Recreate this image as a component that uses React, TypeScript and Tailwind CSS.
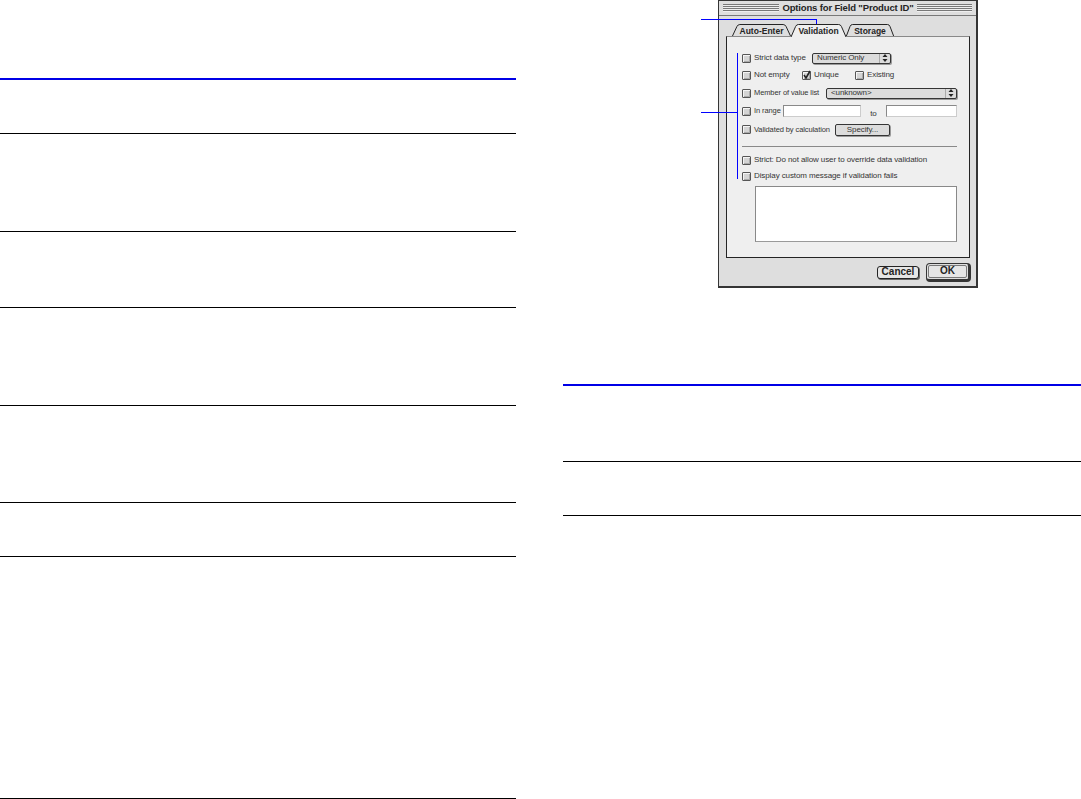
const leftRows = [
  'h-[98px]',
  'h-[76px]',
  'h-[98px]',
  'h-[97px]',
  'h-[54px]',
  'h-[242px]',
];

function Label({ children, tight }: { children: React.ReactNode; tight?: boolean }) {
  return (
    <span className={`whitespace-nowrap leading-none tracking-[-0.1px] text-[#333] ${tight ? 'text-[7.5px]' : 'text-[8px]'}`}>
      {children}
    </span>
  );
}

function Checkbox({ checked, label, className, tight }: { checked?: boolean; label: string; className?: string; tight?: boolean }) {
  return (
    <div className={`flex shrink-0 items-center gap-[3px] ${className ?? ''}`}>
      <div className="relative h-[9px] w-[9px] shrink-0 rounded-[1px] border border-[#555] bg-[#d4d4d4] shadow-[inset_1px_1px_0_#f4f4f4,inset_-1px_-1px_0_#aaa]">
        {checked && (
          <svg viewBox="0 0 10 10" className="absolute left-[-1px] top-[-2px] h-[10px] w-[10px]">
            <path d="M2 5l2 3 4-7" fill="none" stroke="#222" strokeWidth="1.6" />
          </svg>
        )}
      </div>
      <Label tight={tight}>{label}</Label>
    </div>
  );
}

function Arrows() {
  return (
    <div className="flex h-full w-[11px] items-center justify-center border-l border-[#aaa]">
      <svg viewBox="0 0 6 8" className="h-[8px] w-[6px]">
        <path d="M3 0l2.5 3h-5zM3 8l2.5-3h-5z" fill="#222" />
      </svg>
    </div>
  );
}

function Select({ label, className }: { label: string; className: string }) {
  return (
    <div className={`flex h-[11px] items-center justify-between rounded-[2px] border border-[#333] bg-[#dcdcdc] pl-[4px] shadow-[1px_1px_0_#999] ${className}`}>
      <Label>{label}</Label>
      <Arrows />
    </div>
  );
}

function Input({ className }: { className: string }) {
  return <div className={`h-[12px] border border-[#888] border-b-[#ccc] border-r-[#ccc] bg-white ${className}`} />;
}

function Tab({ label, width, active }: { label: string; width: string; active?: boolean }) {
  return (
    <div className={`relative h-[13px] ${width} ${active ? 'z-10' : ''}`}>
      <svg viewBox="0 0 60 13" preserveAspectRatio="none" className="absolute inset-0 h-full w-full">
        <path
          d="M0 13 L5 2.5 Q6 .5 8 .5 H52 Q54 .5 55 2.5 L60 13"
          fill={active ? '#efefef' : '#dedede'}
          stroke="#222"
          strokeWidth="1"
          vectorEffect="non-scaling-stroke"
        />
      </svg>
      <span className="absolute inset-0 flex items-center justify-center pt-[1px] text-[8.5px] font-bold leading-none text-[#222]">
        {label}
      </span>
    </div>
  );
}

function Stripes({ className }: { className: string }) {
  return (
    <div className={`h-[8px] bg-[repeating-linear-gradient(to_bottom,#777_0,#777_1px,#eee_1px,#eee_2px)] ${className}`} />
  );
}

function Dialog() {
  return (
    <div className="relative ml-[155px] flex h-[288px] w-[260px] flex-col border border-[#333] border-b-2 border-r-2 bg-[#dedede] font-['Liberation_Sans',sans-serif] opacity-[0.99]">
      <div className="flex h-[15px] items-center gap-[3px] border-b border-[#777] px-[4px]">
        <Stripes className="w-[56px]" />
        <span className="flex-1 whitespace-nowrap text-center text-[9.5px] font-bold leading-none tracking-[-0.15px] text-[#222]">
          Options for Field "Product ID"
        </span>
        <Stripes className="w-[55px]" />
      </div>

      <div className="mt-[8px] flex pl-[13px]">
        <Tab label="Auto-Enter" width="w-[59px]" />
        <Tab label="Validation" width="w-[55px]" active />
        <Tab label="Storage" width="w-[48px]" />
      </div>

      <div className="relative ml-[7px] mr-[6px] -mt-px flex h-[222px] flex-col border border-[#222] border-t-[#888] bg-[#efefef] pl-[15px] pr-[12px] pt-[13px]">
        <div className="flex h-[16px] items-center">
          <Checkbox label="Strict data type" className="w-[70px]" />
          <Select label="Numeric Only" className="w-[79px]" />
        </div>
        <div className="flex h-[18px] items-center">
          <Checkbox label="Not empty" className="w-[60px]" />
          <Checkbox checked label="Unique" className="w-[53px]" />
          <Checkbox label="Existing" />
        </div>
        <div className="flex h-[18px] items-center">
          <Checkbox tight label="Member of value list" className="w-[84px]" />
          <Select label="<unknown>" className="flex-1" />
        </div>
        <div className="flex h-[18px] items-center">
          <Checkbox tight label="In range" className="w-[41px]" />
          <Input className="w-[78px]" />
          <div className="w-[25px] text-center leading-none">
            <Label>to</Label>
          </div>
          <Input className="flex-1" />
        </div>
        <div className="flex h-[19px] items-center">
          <Checkbox tight label="Validated by calculation" className="w-[93px]" />
          <div className="flex h-[12px] w-[55px] items-center justify-center rounded-[2px] border border-[#333] bg-[#dcdcdc] shadow-[1px_1px_0_#999]">
            <Label>Specify...</Label>
          </div>
        </div>
        <div className="mt-[7px] h-px bg-[#888]" />
        <div className="mt-[5px] flex h-[16px] items-center">
          <Checkbox label="Strict: Do not allow user to override data validation" />
        </div>
        <div className="flex h-[16px] items-center">
          <Checkbox label="Display custom message if validation fails" />
        </div>
        <div className="ml-[13px] mt-[2px] h-[56px] border border-[#888] border-b-[#999] bg-white" />
      </div>

      <div className="flex flex-1 items-center justify-end gap-[7px] pr-[5px]">
        <div className="flex h-[13px] w-[42px] items-center justify-center rounded-[3px] border border-[#222] bg-[#e6e6e6] text-[10px] font-bold leading-none text-[#222] shadow-[1px_1px_0_#666]">
          Cancel
        </div>
        <div className="flex h-[19px] w-[45px] items-center justify-center rounded-[4px] border border-[#333] border-b-[3px] border-r-[3px] p-[1px]">
          <div className="flex h-full w-full items-center justify-center rounded-[2px] border border-[#777] bg-[#e6e6e6] text-[10px] font-bold leading-none text-[#222]">
            OK
          </div>
        </div>
      </div>

      {/* callouts */}
      <div className="absolute left-[-18px] top-[18px] h-px w-[116px] bg-[#0000ff]" />
      <div className="absolute left-[97px] top-[18px] h-[6px] w-px bg-[#0000ff]" />
      <div className="absolute left-[18px] top-[52px] h-[126px] w-px bg-[#0000ff]" />
      <div className="absolute left-[-18px] top-[111px] h-px w-[36px] bg-[#0000ff]" />
    </div>
  );
}

export default function App() {
  return (
    <div className="flex h-[799px] w-[1081px] gap-[47px] overflow-hidden bg-white">
      <div className="w-[516px] pt-[78px]">
        <div className="h-[55px] border-t-2 border-[#0000e6]" />
        {leftRows.map((h, i) => (
          <div key={i} className={`${h} border-t border-black`} />
        ))}
        <div className="border-t border-black" />
      </div>

      <div className="flex-1">
        <Dialog />
        <div className="mt-[96px] h-[77px] border-t-2 border-[#0000e6]" />
        <div className="h-[54px] border-t border-black" />
        <div className="border-t border-black" />
      </div>
    </div>
  );
}
